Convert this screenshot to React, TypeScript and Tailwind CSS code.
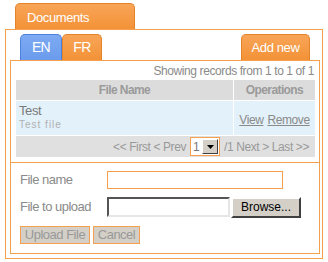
import React from 'react';

const orange = 'border-[#f5a04e]';

export default function App() {
  return (
    <div className="w-[328px] h-[262px] bg-white pt-[3px] pl-[5px] font-['Liberation_Sans',Arial,sans-serif] text-[12px] tracking-[-0.4px] text-[#8a8a8a]">
      {/* top tab */}
      <div className="ml-[10px] w-[120px] h-[26px] rounded-t-[5px] border border-b-0 border-[#e5832c] bg-gradient-to-b from-[#f8a557] to-[#f39236] pl-[11px] pt-[6px] text-[13px] leading-[15px] text-white">
        Documents
      </div>

      {/* outer box */}
      <div className={`w-[318px] h-[230px] border ${orange} pl-[4px] pt-[4px]`}>
        <div className="w-[310px] flex items-end h-[26px]">
          <div className="ml-[10px] w-[42px] h-[26px] rounded-t-[5px] border border-b-0 border-[#4d82dc] bg-gradient-to-b from-[#7eaaf2] to-[#6a9bec] flex items-center justify-center text-[14px] tracking-[-0.6px] text-white">
            EN
          </div>
          <div className="w-[40px] h-[26px] rounded-t-[5px] border border-b-0 border-[#e5832c] bg-gradient-to-b from-[#f8a557] to-[#f39236] flex items-center justify-center text-[14px] tracking-[-0.6px] text-white">
            FR
          </div>
          <div className="ml-auto mr-[10px] w-[69px] h-[26px] rounded-t-[5px] border border-b-0 border-[#e5832c] bg-gradient-to-b from-[#f8a557] to-[#f39236] flex items-center justify-center text-[13px] text-white">
            Add new
          </div>
        </div>

        {/* inner box */}
        <div className={`w-[310px] h-[194px] border ${orange}`}>
          <div className="pl-[5px] pr-[4px]">
            <div className="h-[19px] flex items-end justify-end pr-[1px] pb-[2px] leading-[14px]">
              Showing records from 1 to 1 of 1
            </div>

            <div className="flex flex-col gap-px">
              <div className="flex h-[20px] gap-px">
                <div className="w-[217px] bg-[#dcdcdc] flex items-center justify-center font-bold text-[#9a9a9a] text-[12px] tracking-[-0.6px]">
                  File Name
                </div>
                <div className="flex-1 bg-[#dcdcdc] flex items-center justify-center font-bold text-[#9a9a9a] text-[12px] tracking-[-0.6px]">
                  Operations
                </div>
              </div>
              <div className="flex h-[34px] gap-px">
                <div className="w-[217px] bg-[#e3f1fb] pl-[3px] pt-[3px] leading-[14px]">
                  <div className="text-[13px] text-[#7a7a7a]">Test</div>
                  <div className="text-[10px] tracking-[1px] text-[#b0b0b0]">Test file</div>
                </div>
                <div className="flex-1 bg-[#e3f1fb] flex items-center justify-center gap-[4px] pt-[3px]">
                  <span className="underline">View</span>
                  <span className="underline">Remove</span>
                </div>
              </div>
              <div className="h-[21px] bg-[#e0e0e0] flex items-center justify-end pr-[6px] text-[#999]">
                <span>&lt;&lt; First &lt; Prev</span>
                <div className={`ml-[4px] w-[30px] h-[19px] border ${orange} bg-white flex items-center`}>
                  <span className="ml-[2px] text-[#777] flex-1">1</span>
                  <div className="w-[16px] h-[15px] mr-[1px] bg-[#d4d0c8] border border-t-white border-l-white border-r-[#404040] border-b-[#404040] flex items-center justify-center">
                    <svg width="7" height="4" viewBox="0 0 7 4"><path d="M0 0h7L3.5 4z" fill="#000" /></svg>
                  </div>
                </div>
                <span className="ml-[4px]">/1 Next &gt; Last &gt;&gt;</span>
              </div>
            </div>
          </div>

          {/* form */}
          <div className={`mt-[5px] border-t ${orange} pl-[9px] pt-[8px] text-[13px] tracking-[-0.5px]`}>
            <div className="flex items-center h-[18px]">
              <span className="w-[87px]">File name</span>
              <div className={`w-[176px] h-[18px] border ${orange}`} />
            </div>
            <div className="flex items-center h-[20px] mt-[8px]">
              <span className="w-[87px]">File to upload</span>
              <div className="w-[123px] h-[20px] border-2 border-t-[#555] border-l-[#555] border-r-[#e6e6e6] border-b-[#e6e6e6] bg-white" />
              <div className="ml-[1px] w-[70px] h-[21px] bg-[#d4d0c8] border-2 border-t-white border-l-white border-r-[#404040] border-b-[#404040] flex items-center justify-center text-[12px] tracking-normal text-black">
                Browse...
              </div>
            </div>
            <div className="flex mt-[9px] gap-[3px]">
              <div className={`w-[70px] h-[18px] border ${orange} bg-[#d4d0c8] flex items-center justify-center text-[#999]`}>
                Upload File
              </div>
              <div className={`w-[47px] h-[18px] border ${orange} bg-[#d4d0c8] flex items-center justify-center text-[#999]`}>
                Cancel
              </div>
            </div>
          </div>
        </div>
      </div>
    </div>
  );
}
